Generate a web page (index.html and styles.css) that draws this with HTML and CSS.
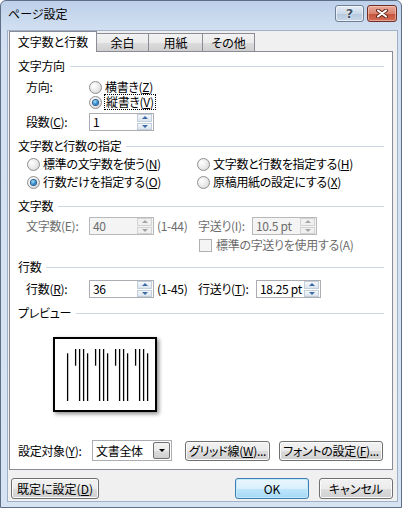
FILE: index.html
```html
<!DOCTYPE html>
<html lang="ja">
<head>
  <meta charset="UTF-8" />
  <meta name="viewport" content="width=device-width, initial-scale=1.0"/>
  <title>ページ設定</title>
  <link rel="stylesheet" href="styles.css">
</head>
<body>
  <div class="window">
    <div class="titlebar">
      <span class="title">ページ設定</span>
      <div class="cap-btn help">?</div>
      <div class="cap-btn close">
        <svg width="12" height="9" viewBox="0 0 12 9">
          <path d="M2 1.5 L10 7.5 M10 1.5 L2 7.5" stroke="#5e2014" stroke-width="3.8" stroke-linecap="round"/>
          <path d="M2 1.5 L10 7.5 M10 1.5 L2 7.5" stroke="#fff" stroke-width="2.1" stroke-linecap="round"/>
        </svg>
      </div>
    </div>

    <div class="client">
      <div class="tabs">
        <div class="tab active">文字数と行数</div>
        <div class="tab t2">余白</div>
        <div class="tab t3">用紙</div>
        <div class="tab t4">その他</div>
      </div>

      <div class="panel">
        <div class="sec-title">文字方向</div>
        <div class="row r-dir">
          <span class="label">方向:</span>
          <span class="radio"><i></i>横書き(<u>Z</u>)</span>
        </div>
        <div class="row r-vert">
          <span class="radio checked"><i></i><span class="focus">縦書き(<u>V</u>)</span></span>
        </div>
        <div class="row r-spin r-cols">
          <span class="label">段数(<u>C</u>):</span>
          <div class="spin"><span class="val">1</span><span class="arrows"><b class="up"></b><b class="down"></b></span></div>
        </div>

        <div class="sec-title s2">文字数と行数の指定</div>
        <div class="radio-grid">
          <span class="radio"><i></i>標準の文字数を使う(<u>N</u>)</span>
          <span class="radio"><i></i>文字数と行数を指定する(<u>H</u>)</span>
          <span class="radio checked"><i></i>行数だけを指定する(<u>O</u>)</span>
          <span class="radio"><i></i>原稿用紙の設定にする(<u>X</u>)</span>
        </div>

        <div class="sec-title s3">文字数</div>
        <div class="row r-spin r-chars disabled">
          <span class="label">文字数(E):</span>
          <div class="spin"><span class="val">40</span><span class="arrows"><b class="up"></b><b class="down"></b></span></div>
          <span class="range">(1-44)</span>
          <span class="label2 w54">字送り(I):</span>
          <div class="spin"><span class="val">10.5 pt</span><span class="arrows"><b class="up"></b><b class="down"></b></span></div>
        </div>
        <div class="row r-check disabled">
          <span class="check"><i></i>標準の字送りを使用する(A)</span>
        </div>

        <div class="sec-title s4">行数</div>
        <div class="row r-spin r-lines">
          <span class="label">行数(<u>R</u>):</span>
          <div class="spin"><span class="val">36</span><span class="arrows"><b class="up"></b><b class="down"></b></span></div>
          <span class="range">(1-45)</span>
          <span class="label2 w58">行送り(<u>T</u>):</span>
          <div class="spin"><span class="val">18.25 pt</span><span class="arrows"><b class="up"></b><b class="down"></b></span></div>
        </div>

        <div class="sec-title s5">プレビュー</div>
        <div class="preview">
          <svg width="100" height="71" viewBox="0 0 100 71" stroke="#000" stroke-width="1.3">
            <line x1="12.6" y1="14.3" x2="12.6" y2="62"/>
            <line x1="20.6" y1="10" x2="20.6" y2="26.7"/>
            <line x1="24.6" y1="10" x2="24.6" y2="62"/>
            <line x1="28.6" y1="10" x2="28.6" y2="62"/>
            <line x1="32.6" y1="14.3" x2="32.6" y2="62"/>
            <line x1="40.6" y1="10" x2="40.6" y2="26.7"/>
            <line x1="44.6" y1="10" x2="44.6" y2="62"/>
            <line x1="48.6" y1="10" x2="48.6" y2="62"/>
            <line x1="52.6" y1="14.3" x2="52.6" y2="62"/>
            <line x1="60.6" y1="10" x2="60.6" y2="26.7"/>
            <line x1="64.6" y1="10" x2="64.6" y2="62"/>
            <line x1="68.6" y1="10" x2="68.6" y2="62"/>
            <line x1="72.6" y1="14.3" x2="72.6" y2="62"/>
            <line x1="80.6" y1="10" x2="80.6" y2="26.7"/>
            <line x1="84.6" y1="10" x2="84.6" y2="62"/>
            <line x1="88.6" y1="10" x2="88.6" y2="62"/>
            <line x1="92.6" y1="14.3" x2="92.6" y2="62"/>
          </svg>
        </div>

        <div class="row r-apply">
          <span class="apply-label">設定対象(<u>Y</u>):</span>
          <div class="select">
            <span class="select-text">文書全体</span>
            <span class="select-btn"><b></b></span>
          </div>
          <button class="btn grid-btn">グリッド線(<u>W</u>)...</button>
          <button class="btn font-btn">フォントの設定(<u>F</u>)...</button>
        </div>
      </div>

      <div class="dialog-buttons">
        <button class="btn reset-btn">既定に設定(<u>D</u>)</button>
        <button class="btn default ok-btn">OK</button>
        <button class="btn cancel-btn">キャンセル</button>
      </div>
    </div>
  </div>
</body>
</html>
```

FILE: styles.css
```css
* {
  box-sizing: border-box;
}

body {
  margin: 0;
  font-family: "Noto Sans CJK JP", "Liberation Sans", sans-serif;
  font-size: 12px;
  font-feature-settings: "palt";
  color: #000;
  background: #fff;
}

u {
  text-decoration: underline;
  text-underline-offset: 1px;
}

/* window frame */
.window {
  width: 402px;
  height: 508px;
  border: 1px solid #5d6e86;
  border-radius: 6px 6px 0 0;
  background: linear-gradient(#bdd1ea, #d2e0f1 30px, #d6e3f2);
  padding: 0 3px 5px 6px;
  display: flex;
  flex-direction: column;
}

.titlebar {
  height: 29px;
  display: flex;
  align-items: flex-start;
}

.title {
  padding: 6px 0 0 1px;
  line-height: 14px;
  color: #000;
}

.cap-btn {
  margin-top: 4px;
  height: 17px;
  border-radius: 3px;
  display: flex;
  align-items: center;
  justify-content: center;
}

.help {
  margin-left: auto;
  width: 29px;
  border: 1px solid #6f7f94;
  background: linear-gradient(#e5edf6, #cad8e8 50%, #b6c8dd 51%, #c8d8ea);
  box-shadow: inset 0 0 0 1px rgba(255, 255, 255, 0.6);
  font-family: "DejaVu Sans", sans-serif;
  font-weight: bold;
  font-size: 13px;
  color: #44556b;
  text-shadow: 0 0 2px #fff, 0 0 1px #fff;
}

.close {
  margin-left: 3px;
  margin-right: 1px;
  width: 30px;
  border: 1px solid #6e2f26;
  background: linear-gradient(#e9a999, #d98370 50%, #c5533c 51%, #d26c55);
  box-shadow: inset 0 0 0 1px rgba(255, 220, 210, 0.5);
}

.client {
  flex: 1;
  background: #f0f0f0;
  border: 1px solid #9fb1c7;
  padding: 0 4px 0 1px;
}

/* tabs */
.tabs {
  height: 20px;
  display: flex;
  align-items: flex-end;
}

.tab {
  height: 18px;
  margin-right: -1px;
  border: 1px solid #898c95;
  border-bottom: none;
  background: linear-gradient(#f2f2f2, #ebebeb 50%, #dddddd 51%, #cfcfcf);
  display: flex;
  align-items: center;
  justify-content: center;
  line-height: 14px;
  padding-top: 1px;
}

.tab.active {
  width: 88px;
  height: 21px;
  margin-bottom: -1px;
  background: #fff;
  position: relative;
  z-index: 1;
  padding-top: 0;
}

.t2 { width: 53px; }
.t3 { width: 55px; }
.t4 { width: 53px; }

.panel {
  border: 1px solid #898c95;
  background: #fff;
  padding: 7px 8px 8px 8px;
  letter-spacing: -0.3px;
}

.sec-title {
  height: 14px;
  line-height: 14px;
  display: flex;
  align-items: center;
  gap: 5px;
}

.sec-title::after {
  content: "";
  flex: 1;
  height: 1px;
  background: #cdd7e2;
}

.s2 { margin-top: 8px; }
.s3 { margin-top: 10px; }
.s4 { margin-top: 8px; }
.s5 { margin-top: 8px; }

.row {
  display: flex;
  align-items: center;
  height: 14px;
  line-height: 14px;
  padding-left: 8px;
  white-space: nowrap;
}

.label {
  width: 63px;
  flex: none;
}

.r-dir { margin-top: 7px; }

.r-vert {
  margin-top: 1px;
  padding-left: 71px;
}

.r-spin { height: 18px; }
.r-cols { margin-top: 4px; }
.r-chars { margin-top: 4px; }
.r-lines { margin-top: 6px; }

.range {
  width: 41px;
  margin-left: 3px;
  flex: none;
}

.label2 { flex: none; }
.w54 { width: 54px; }
.w58 { width: 58px; }

.r-check {
  margin-top: 3px;
  padding-left: 181px;
}

.disabled {
  color: #6d6d6d;
}

/* radio & check */
.radio, .check {
  display: flex;
  align-items: center;
  white-space: nowrap;
}

.radio i {
  width: 13px;
  height: 13px;
  margin-right: 3px;
  border-radius: 50%;
  border: 1px solid #8e8f8f;
  background: radial-gradient(circle at 35% 35%, #ffffff, #e8e8e8 55%, #cdcdcd);
  display: flex;
  align-items: center;
  justify-content: center;
  flex: none;
}

.radio.checked i::after {
  content: "";
  width: 5px;
  height: 5px;
  border-radius: 50%;
  background: radial-gradient(circle at 40% 35%, #a6e4fb, #1c78c2 65%, #0c4f8e);
  box-shadow: 0 0 0 1px #2a5f93;
}

.focus {
  outline: 1px dotted #000;
  outline-offset: 0;
  padding: 0 1px;
}

.check i {
  width: 13px;
  height: 13px;
  margin-right: 4px;
  border: 1px solid #b1b1b1;
  background: #f4f4f4;
  flex: none;
}

.radio-grid {
  margin-top: 4px;
  padding-left: 9px;
  display: grid;
  grid-template-columns: 170px 1fr;
  grid-auto-rows: 14px;
  row-gap: 4px;
  line-height: 14px;
}

/* spin edit */
.spin {
  width: 65px;
  height: 18px;
  display: flex;
  border: 1px solid #abadb3;
  background: #fff;
  flex: none;
}

.spin .val {
  flex: 1;
  padding-left: 3px;
  line-height: 16px;
  white-space: nowrap;
  overflow: hidden;
}

.spin .arrows {
  width: 16px;
  flex: none;
  display: flex;
  flex-direction: column;
  gap: 1px;
  padding: 0 1px 0 0;
}

.spin b {
  flex: 1;
  display: flex;
  align-items: center;
  justify-content: center;
  border: 1px solid #c3cedb;
  background: linear-gradient(#f5f8fb, #dbe3ed);
}

.spin b::after {
  content: "";
  border-left: 3px solid transparent;
  border-right: 3px solid transparent;
}

.spin .up::after {
  border-bottom: 3px solid #3d6aa3;
}

.spin .down::after {
  border-top: 3px solid #3d6aa3;
}

.disabled .spin {
  border-color: #b9b9b9;
  background: #f4f4f4;
}

.disabled .spin b {
  border-color: #d2d2d2;
  background: #f0f0f0;
}

.disabled .spin .up::after { border-bottom-color: #a5a5a5; }
.disabled .spin .down::after { border-top-color: #a5a5a5; }

/* preview */
.preview {
  width: 104px;
  height: 75px;
  margin: 17px 0 0 35px;
  border: 2px solid #000;
  background: #fff;
  box-shadow: 2px 2px 4px rgba(0, 0, 0, 0.45);
}

.preview svg {
  display: block;
}

/* apply row */
.r-apply {
  margin-top: 28px;
  height: 21px;
  padding-left: 0;
}

.apply-label {
  width: 74px;
  flex: none;
}

.select {
  width: 80px;
  height: 21px;
  display: flex;
  border: 1px solid #abadb3;
  background: #fff;
  flex: none;
}

.select-text {
  flex: 1;
  padding-left: 3px;
  line-height: 19px;
}

.select-btn {
  width: 17px;
  margin: 1px;
  border: 1px solid #707070;
  border-radius: 2px;
  background: linear-gradient(#f2f2f2, #ebebeb 50%, #dddddd 51%, #cfcfcf);
  display: flex;
  align-items: center;
  justify-content: center;
}

.select-btn b {
  border-left: 3px solid transparent;
  border-right: 3px solid transparent;
  border-top: 3px solid #000;
}

/* buttons */
.btn {
  font: inherit;
  letter-spacing: inherit;
  color: #000;
  height: 20px;
  padding: 0;
  line-height: 16px;
  border: 1px solid #707070;
  border-radius: 3px;
  background: linear-gradient(#f2f2f2, #ebebeb 50%, #dddddd 51%, #cfcfcf);
  box-shadow: inset 0 0 0 1px #fbfbfb;
  flex: none;
  white-space: nowrap;
}

.btn.default {
  border-color: #3c7fb1;
  background: linear-gradient(#eaf6fd, #d9f0fc 50%, #bee6fd 51%, #a7d9f5);
  box-shadow: inset 0 0 0 1px #c5e8fb;
}

.grid-btn {
  width: 85px;
  margin-left: 13px;
}

.font-btn {
  width: 104px;
  margin-left: 9px;
}

.dialog-buttons {
  margin-top: 8px;
  display: flex;
  padding-left: 2px;
}

.dialog-buttons .btn {
  height: 21px;
}

.reset-btn {
  width: 88px;
}

.ok-btn {
  width: 74px;
  margin-left: auto;
}

.cancel-btn {
  width: 74px;
  margin-left: 10px;
}
```
